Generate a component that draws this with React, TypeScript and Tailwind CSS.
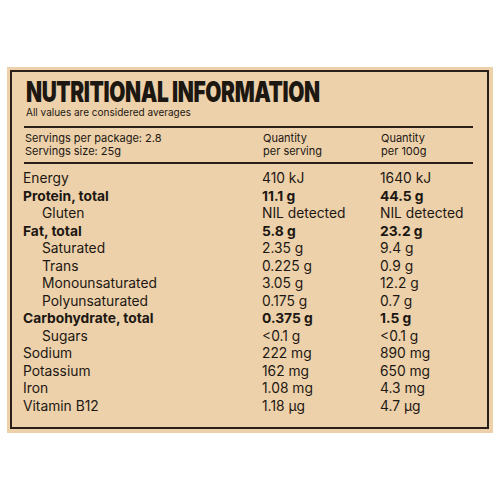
import React from "react";

type Row = { label: string; a: string; b: string; bold?: boolean; indent?: boolean };

const rows: Row[] = [
  { label: "Energy", a: "410 kJ", b: "1640 kJ" },
  { label: "Protein, total", a: "11.1 g", b: "44.5 g", bold: true },
  { label: "Gluten", a: "NIL detected", b: "NIL detected", indent: true },
  { label: "Fat, total", a: "5.8 g", b: "23.2 g", bold: true },
  { label: "Saturated", a: "2.35 g", b: "9.4 g", indent: true },
  { label: "Trans", a: "0.225 g", b: "0.9 g", indent: true },
  { label: "Monounsaturated", a: "3.05 g", b: "12.2 g", indent: true },
  { label: "Polyunsaturated", a: "0.175 g", b: "0.7 g", indent: true },
  { label: "Carbohydrate, total", a: "0.375 g", b: "1.5 g", bold: true },
  { label: "Sugars", a: "<0.1 g", b: "<0.1 g", indent: true },
  { label: "Sodium", a: "222 mg", b: "890 mg" },
  { label: "Potassium", a: "162 mg", b: "650 mg" },
  { label: "Iron", a: "1.08 mg", b: "4.3 mg" },
  { label: "Vitamin B12", a: "1.18 µg", b: "4.7 µg" },
];

export default function App() {
  return (
    <div
      className="w-[500px] h-[500px] bg-white pt-[67px] pl-[7px] text-[#1d1712]"
      style={{ fontFamily: "Inter, 'Noto Sans', sans-serif" }}
    >
      <div className="w-[486px] h-[366px] bg-[#ecd1ab] pt-[3px] pl-[3px]">
        <div className="w-[479px] h-[359px] border-2 border-[#2a2019] pl-[11px] pr-[14px]">
          <div className="pl-[3px] pt-[6px] h-[34px]">
            <div className="origin-left scale-x-[0.745] whitespace-nowrap text-[28px] leading-[28px] font-black tracking-[-0.5px]">
              NUTRITIONAL INFORMATION
            </div>
          </div>
          <div className="pl-[3px] h-[12px] text-[10px] leading-[12px]">All values are considered averages</div>
          <div className="ml-[1px] mt-[8px] h-[2px] bg-[#2a2019]" />
          <div className="grid grid-cols-[238px_118px_1fr] pl-[2px] pt-[4px] text-[11px] leading-[13px] h-[34px]">
            <div>
              <div>Servings per package: 2.8</div>
              <div>Servings size: 25g</div>
            </div>
            <div>
              <div>Quantity</div>
              <div>per serving</div>
            </div>
            <div>
              <div>Quantity</div>
              <div>per 100g</div>
            </div>
          </div>
          <div className="ml-[1px] h-[2px] bg-[#2a2019]" />
          <div className="pt-[6px] text-[13.8px] leading-[17.5px]">
            {rows.map((r) => (
              <div key={r.label} className={`grid grid-cols-[239px_118px_1fr] ${r.bold ? "font-bold" : ""}`}>
                <div className={r.indent ? "pl-[19px]" : ""}>{r.label}</div>
                <div>{r.a}</div>
                <div>{r.b}</div>
              </div>
            ))}
          </div>
        </div>
      </div>
    </div>
  );
}
